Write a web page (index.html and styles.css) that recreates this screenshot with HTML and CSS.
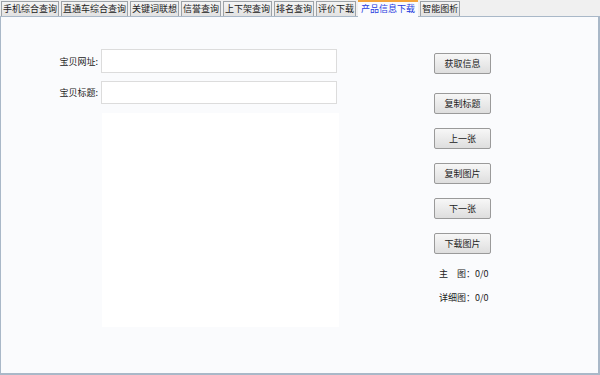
FILE: index.html
```html
<!DOCTYPE html>
<html lang="zh-CN">
<head>
  <meta charset="UTF-8">
  <title>产品信息下载</title>
  <link rel="stylesheet" href="styles.css">
</head>
<body>

  <!-- Tabs -->
  <div class="tabs">
    <div class="tab">手机综合查询</div>
    <div class="tab">直通车综合查询</div>
    <div class="tab">关键词联想</div>
    <div class="tab">信誉查询</div>
    <div class="tab">上下架查询</div>
    <div class="tab">排名查询</div>
    <div class="tab">评价下载</div>
    <div class="tab active">产品信息下载</div>
    <div class="tab">智能图析</div>
  </div>

  <!-- Panel -->
  <div class="panel">
    <div class="form-section">
      <div class="row">
        <label>宝贝网址:</label>
        <input type="text" class="url-input">
      </div>
      <div class="row">
        <label>宝贝标题:</label>
        <input type="text" class="title-input">
      </div>
      <div class="image-box"></div>
    </div>

    <div class="side-section">
      <button class="first">获取信息</button>
      <button class="second">复制标题</button>
      <button>上一张</button>
      <button>复制图片</button>
      <button>下一张</button>
      <button>下载图片</button>
      <div class="info first-info">主　图：0/0</div>
      <div class="info">详细图：0/0</div>
    </div>
  </div>

</body>
</html>
```

FILE: styles.css
```css
* {
  box-sizing: border-box;
}
body {
  margin: 0;
  width: 600px;
  height: 375px;
  background-color: #f0f0f0;
  font-family: "Noto Sans CJK SC", "Noto Sans", sans-serif;
  font-size: 9px;
  color: #222;
  display: flex;
  flex-direction: column;
  overflow: hidden;
}
.tabs {
  display: flex;
  gap: 2px;
  padding-left: 1px;
  height: 16px;
  align-items: flex-end;
}
.tab {
  height: 15px;
  padding: 0 1px;
  line-height: 13px;
  border: 1px solid #9ea3a8;
  border-bottom: none;
  background: linear-gradient(#f4f4f4, #e2e2e2);
  white-space: nowrap;
}
.tab.active {
  height: 17px;
  padding: 0 3px;
  margin-bottom: -1px;
  border: none;
  border-top: 2px solid #f4a43a;
  background: #fafbfd;
  color: #1f3ce0;
  line-height: 14px;
  position: relative;
  z-index: 1;
}
.panel {
  flex: 1;
  display: flex;
  background-color: #fafbfd;
  border: 1px solid #a9b8c8;
  border-width: 1px 2px 2px 1px;
}
.form-section {
  margin-left: 50px;
  padding-top: 32px;
  display: flex;
  flex-direction: column;
}
.row {
  display: flex;
  align-items: center;
  margin-bottom: 8px;
}
.row label {
  width: 48px;
  text-align: right;
  padding-right: 1px;
  margin-right: 2px;
}
input {
  width: 236px;
  height: 24px;
  border: 1px solid #dcdcdc;
  background: white;
  outline: none;
}
.title-input {
  height: 23px;
}
.image-box {
  margin-left: 51px;
  margin-top: 1px;
  width: 237px;
  height: 214px;
  background: white;
}
.side-section {
  margin-left: 95px;
  padding-top: 36px;
  display: flex;
  flex-direction: column;
  align-items: flex-start;
}
button {
  width: 57px;
  height: 21px;
  margin-top: 14px;
  padding: 0;
  font-family: inherit;
  font-size: 9px;
  color: #222;
  border: 1px solid #9a9a9a;
  border-radius: 2px;
  background: linear-gradient(#f7f7f7, #dedede);
}
button.first {
  margin-top: 0;
}
button.second {
  margin-top: 19px;
}
.info {
  margin-left: 5px;
  margin-top: 11px;
  line-height: 13px;
}
.first-info {
  margin-top: 13px;
}
```
